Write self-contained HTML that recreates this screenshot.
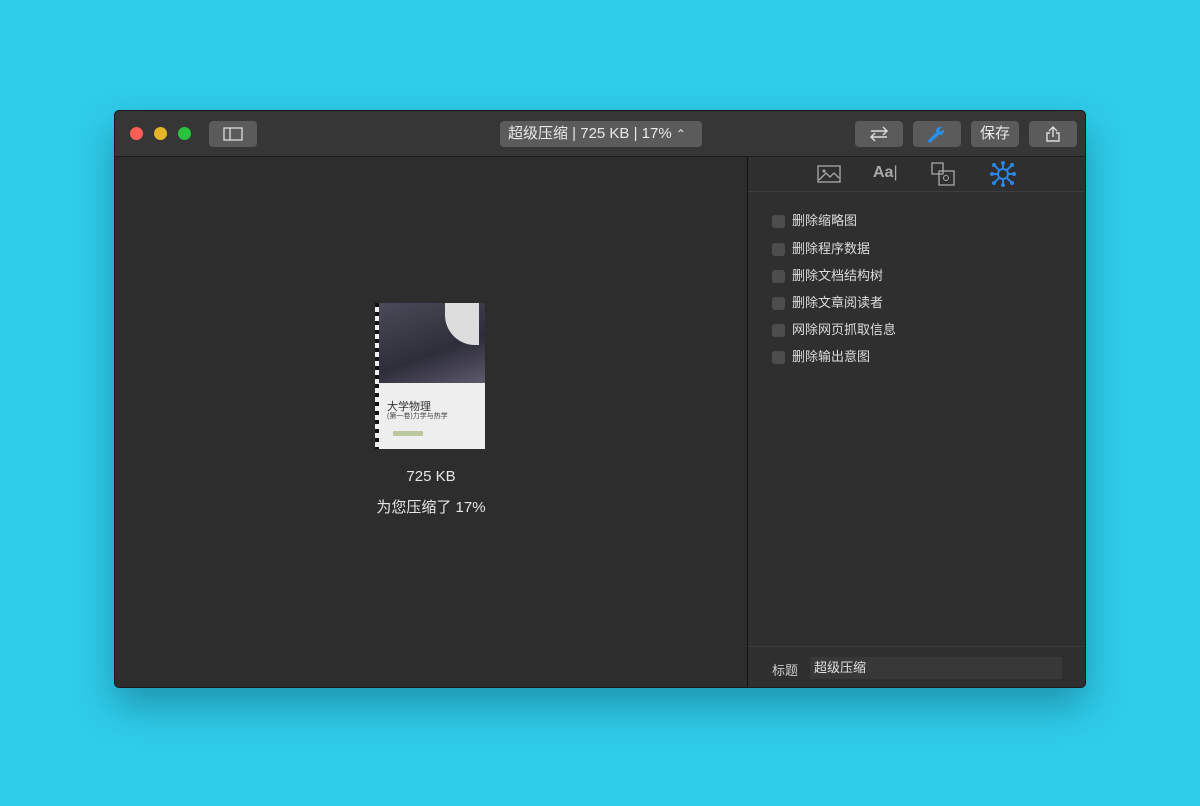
<!DOCTYPE html>
<html><head><meta charset="utf-8"><style>
body{margin:0;width:1200px;height:806px;background:#2fcdea;font-family:"Liberation Sans","Noto Sans CJK SC",sans-serif;position:relative;overflow:hidden}
.win{position:absolute;left:114px;top:110px;width:972px;height:578px;background:#2c2c2c;border-radius:5px;box-shadow:0 18px 40px rgba(0,40,60,.35);overflow:hidden;border:1px solid #1a1a1a;box-sizing:border-box}
.tb{position:absolute;left:0;top:0;right:0;height:45px;background:#363636;border-bottom:1px solid #1c1c1c}
.dot{position:absolute;top:16px;width:13px;height:13px;border-radius:50%}
.btn{position:absolute;top:10px;height:26px;background:#5b5b5b;border-radius:4px;color:#e8e8e8;font-size:15px;line-height:26px;text-align:center}
.left{position:absolute;left:0;top:46px;width:632px;bottom:0;background:#2d2d2d}
.div{position:absolute;left:632px;top:46px;width:1px;bottom:0;background:#111}
.right{position:absolute;left:633px;top:46px;right:0;bottom:0;background:#2f2f2f}
.cb{position:absolute;left:24px;width:13px;height:13px;background:#4d4d4d;border-radius:3px}
.lbl{position:absolute;left:44px;color:#dcdcdc;font-size:13px;line-height:16px}
</style></head><body>
<div class="win">
 <div class="tb">
  <div class="dot" style="left:15px;background:#fd5f57"></div>
  <div class="dot" style="left:39px;background:#e4b52a"></div>
  <div class="dot" style="left:63px;background:#2ac33f"></div>
  <div class="btn" style="left:94px;width:48px"><svg width="20" height="14" style="margin-top:6px"><rect x="1" y="1" width="18" height="12" fill="none" stroke="#ddd" stroke-width="1.3"/><line x1="7" y1="1" x2="7" y2="13" stroke="#ddd" stroke-width="1.3"/></svg></div>
  <div class="btn" style="left:385px;width:202px;text-align:left;padding-left:8px;box-sizing:border-box">超级压缩 | 725 KB | 17% <span style="font-size:12px">⌃</span></div>
  <div class="btn" style="left:740px;width:48px"><svg width="26" height="18" style="margin-top:4px"><path d="M5 6 H21 M17 2 L21 6 L17 10 M21 12 H5 M9 8 L5 12 L9 16" fill="none" stroke="#ddd" stroke-width="1.4"/></svg></div>
  <div class="btn" style="left:798px;width:48px"><svg width="20" height="18" style="margin-top:4px"><path d="M3 16 L11 8" stroke="#2b8fe8" stroke-width="3.5" stroke-linecap="round"/><circle cx="13" cy="6" r="4" fill="#2b8fe8"/><path d="M13 6 L17 2" stroke="#5b5b5b" stroke-width="2.5"/></svg></div>
  <div class="btn" style="left:856px;width:48px">保存</div>
  <div class="btn" style="left:914px;width:48px"><svg width="16" height="18" style="margin-top:4px"><path d="M8 12V2 M4 6 L8 2 L12 6 M5 8H2V16H14V8H11" fill="none" stroke="#ddd" stroke-width="1.4"/></svg></div>
 </div>
 <div class="left">
  <div style="position:absolute;left:260px;top:146px;width:110px;height:146px;background:#eee">
   <div style="height:80px;background:linear-gradient(160deg,#4b4a58,#2e2d3a 60%,#5c5a6c)"></div>
   <div style="position:absolute;left:70px;top:0;width:34px;height:42px;background:#ddd;border-radius:0 0 0 30px"></div>
   <div style="position:absolute;left:12px;top:95px;font-size:11px;color:#333">大学物理</div>
   <div style="position:absolute;left:12px;top:108px;font-size:7px;color:#444">(第一卷)力学与热学</div>
   <div style="position:absolute;left:18px;top:128px;width:30px;height:5px;background:#bcc6a0"></div>
   <div style="position:absolute;left:0;top:0;width:4px;height:146px;background:repeating-linear-gradient(#111 0 4px,#eee 4px 9px)"></div>
  </div>
  <div style="position:absolute;left:0;width:632px;top:311px;text-align:center;color:#e6e6e6;font-size:15px">725 KB</div>
  <div style="position:absolute;left:0;width:632px;top:339px;text-align:center;color:#e6e6e6;font-size:15px">为您压缩了 17%</div>
 </div>
 <div class="div"></div>
 <div class="right">
  <div style="position:absolute;left:0;right:0;top:34px;height:1px;background:#3e3e3e"></div>
  <svg style="position:absolute;left:68px;top:6px" width="26" height="22"><rect x="2" y="3" width="22" height="16" fill="none" stroke="#aaa" stroke-width="1.3"/><path d="M3 17 L10 10 L14 14 L18 10 L23 15" fill="none" stroke="#aaa" stroke-width="1.3"/><circle cx="8" cy="8" r="1.5" fill="#aaa"/></svg>
  <div style="position:absolute;left:125px;top:7px;color:#aaa;font-weight:bold;font-size:16px">Aa<span style="font-weight:normal">|</span></div>
  <svg style="position:absolute;left:182px;top:4px" width="26" height="26"><path d="M2 2H13V13H2Z M9 10H24V24H9Z" fill="none" stroke="#aaa" stroke-width="1.3"/><circle cx="16" cy="17" r="2.5" fill="none" stroke="#aaa"/></svg>
  <svg style="position:absolute;left:242px;top:4px" width="26" height="26"><g stroke="#2a86e0" stroke-width="2" fill="none"><circle cx="13" cy="13" r="5"/><path d="M13 1V8 M13 18V25 M1 13H8 M18 13H25 M4 4L9 9 M22 4L17 9 M4 22L9 17 M22 22L17 17"/></g><g fill="#2a86e0"><circle cx="13" cy="2" r="2"/><circle cx="13" cy="24" r="2"/><circle cx="2" cy="13" r="2"/><circle cx="24" cy="13" r="2"/><circle cx="4" cy="4" r="2"/><circle cx="22" cy="4" r="2"/><circle cx="4" cy="22" r="2"/><circle cx="22" cy="22" r="2"/></g></svg>
  <div class="cb" style="top:58px"></div><div class="lbl" style="top:56px">删除缩略图</div>
  <div class="cb" style="top:86px"></div><div class="lbl" style="top:84px">删除程序数据</div>
  <div class="cb" style="top:113px"></div><div class="lbl" style="top:111px">删除文档结构树</div>
  <div class="cb" style="top:140px"></div><div class="lbl" style="top:138px">删除文章阅读者</div>
  <div class="cb" style="top:167px"></div><div class="lbl" style="top:165px">网除网页抓取信息</div>
  <div class="cb" style="top:194px"></div><div class="lbl" style="top:192px">删除输出意图</div>
  <div style="position:absolute;left:0;right:0;top:489px;height:1px;background:#3c3c3c"></div>
  <div style="position:absolute;left:24px;top:503px;color:#ccc;font-size:13px">标题</div>
  <div style="position:absolute;left:62px;top:500px;width:252px;height:22px;background:#383838;color:#e0e0e0;font-size:13px;line-height:22px;padding-left:4px;box-sizing:border-box">超级压缩</div>
 </div>
</div>
</body></html>
